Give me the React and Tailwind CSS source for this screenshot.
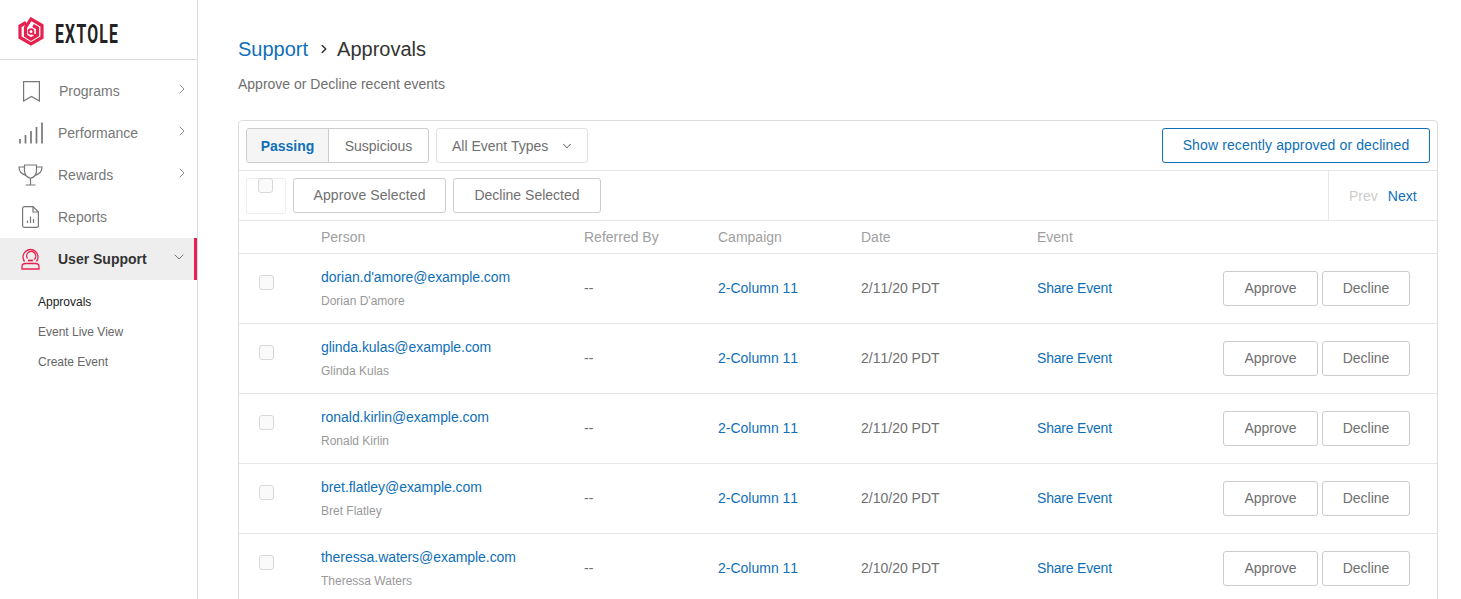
import { ChevronRight, ChevronDown } from 'lucide-react'

const rows = [
  { email: "dorian.d'amore@example.com", name: "Dorian D'amore", date: '2/11/20 PDT' },
  { email: 'glinda.kulas@example.com', name: 'Glinda Kulas', date: '2/11/20 PDT' },
  { email: 'ronald.kirlin@example.com', name: 'Ronald Kirlin', date: '2/11/20 PDT' },
  { email: 'bret.flatley@example.com', name: 'Bret Flatley', date: '2/10/20 PDT' },
  { email: 'theressa.waters@example.com', name: 'Theressa Waters', date: '2/10/20 PDT' },
]

function Logo() {
  return (
    <svg width="26" height="29" viewBox="0 0 26 29" fill="none" stroke="#e8204f">
      <path d="M8 5.5 L2 9 V20.5 L13 27 L24 20.5 V8.5 L13 2 L7.5 10.5 V18.5 L13 22 L19.5 18 V11 L15 8.5" strokeWidth="3.2" />
      <circle cx="13" cy="14.5" r="2.4" strokeWidth="1.8" />
      <path d="M14.5 16.5 L18 18.5" strokeWidth="1.8" />
    </svg>
  )
}

function BookmarkIcon() {
  return (
    <svg width="17" height="21" viewBox="0 0 17 21" fill="none" stroke="#777" strokeWidth="1.2">
      <path d="M.6.6 H16.4 V20 L8.5 15.5 L.6 20 Z" />
    </svg>
  )
}

function BarsIcon() {
  return (
    <svg width="24" height="22" viewBox="0 0 24 22" fill="none" stroke="#777" strokeWidth="1.7">
      <path d="M1 17 V21.5 M6.5 13 V21.5 M12 9 V21.5 M17.5 5 V21.5 M23 .5 V21.5" />
    </svg>
  )
}

function TrophyIcon() {
  return (
    <svg width="25" height="22" viewBox="0 0 25 22" fill="none" stroke="#777" strokeWidth="1.2">
      <path d="M6.5 1 H18.5 V7 C18.5 11 15.5 14 12.5 14 C9.5 14 6.5 11 6.5 7 Z" />
      <path d="M6.5 3 H1 C1 7 3.5 10 8 11.5 M18.5 3 H24 C24 7 21.5 10 17 11.5" />
      <path d="M12.5 14 V20.5 M7.5 21 H17.5" />
    </svg>
  )
}

function ReportIcon() {
  return (
    <svg width="17" height="22" viewBox="0 0 17 22" fill="none" stroke="#777" strokeWidth="1.2">
      <path d="M2.5.6 H11 L16.4 6 V19.5 C16.4 20.6 15.6 21.4 14.5 21.4 H2.5 C1.4 21.4 .6 20.6 .6 19.5 V2.5 C.6 1.4 1.4 .6 2.5 .6 Z" />
      <path d="M11 .6 V6 H16.4" />
      <path d="M5.5 17 V14.5 M8.5 17 V10.5 M11.5 17 V13" />
    </svg>
  )
}

function SupportIcon() {
  return (
    <svg width="19" height="22" viewBox="0 0 19 22" fill="none" stroke="#e8204f" strokeWidth="1.3">
      <path d="M3.5 13.5 A7.5 7.5 0 1 1 15.5 13.5" />
      <path d="M6.5 10.5 A4.5 4.5 0 1 1 13 11.5" />
      <path d="M7 12.5 H12" strokeWidth="1.8" />
      <path d="M1 21 V18.5 C1 16.5 2.5 15.5 4.5 15.5 H14.5 C16.5 15.5 18 16.5 18 18.5 V21 Z" />
    </svg>
  )
}

function NavItem({ icon, label, active, hasArrow, iconClass }) {
  return (
    <div className={'relative flex h-[42px] items-center ' + (active ? 'bg-[#eeeeee]' : '')}>
      <div className={'flex shrink-0 ' + iconClass}>{icon}</div>
      <span className={'text-sm ' + (active ? 'font-bold text-[#333]' : 'text-[#777]')}>{label}</span>
      {hasArrow && <ChevronRight className="absolute right-[7px] top-[11px] text-[#777]" size={16} strokeWidth={1.2} />}
      {active && <ChevronDown className="absolute right-[10px] top-[11px] text-[#555]" size={16} strokeWidth={1.2} />}
      {active && <div className="absolute right-0 top-0 h-full w-[3px] bg-[#e8204f]" />}
    </div>
  )
}

function Sidebar() {
  return (
    <aside className="w-[198px] shrink-0 border-r border-[#dddddd] bg-white">
      <div className="flex h-[60px] items-center border-b border-[#dddddd] pl-[18px] pt-[3px]">
        <Logo />
        <span className="ml-[11px] mt-[7px] origin-left scale-x-[0.63] font-['Roboto',sans-serif] text-[25px] font-bold tracking-[2px] text-[#222]">EXTOLE</span>
      </div>
      <div className="pt-[10px]">
        <NavItem icon={<BookmarkIcon />} label="Programs" hasArrow iconClass="w-[59px] pl-[23px]" />
        <NavItem icon={<BarsIcon />} label="Performance" hasArrow iconClass="w-[58px] pl-[19px]" />
        <NavItem icon={<TrophyIcon />} label="Rewards" hasArrow iconClass="w-[58px] pl-[18px]" />
        <NavItem icon={<ReportIcon />} label="Reports" iconClass="w-[58px] pl-[22px]" />
        <NavItem icon={<SupportIcon />} label="User Support" active iconClass="w-[58px] pl-[21px]" />
      </div>
      <div className="pt-[7px] text-xs text-[#666]">
        <div className="flex h-[30px] items-center pl-[38px] text-[#222]">Approvals</div>
        <div className="flex h-[30px] items-center pl-[38px]">Event Live View</div>
        <div className="flex h-[30px] items-center pl-[38px]">Create Event</div>
      </div>
    </aside>
  )
}

function Btn({ children, className }) {
  return (
    <button className={'flex h-[35px] items-center justify-center rounded-[3px] border border-[#cccccc] bg-white pb-px text-sm text-[#707070] ' + className}>
      {children}
    </button>
  )
}

function Checkbox({ className }) {
  return <span className={'block h-[15px] w-[15px] rounded-[3px] border border-[#d8d8d8] bg-[#fafafa] ' + className} />
}

function Row({ row }) {
  return (
    <div className="flex h-[70px] items-center border-t border-[#e6e6e6] text-sm">
      <div className="w-[82px] pb-[12px] pl-[20px]"><Checkbox /></div>
      <div className="w-[263px] pb-[2px]">
        <div className="tracking-[-0.05px] text-[#0f6fb8]">{row.email}</div>
        <div className="mt-[6px] text-xs text-[#999]">{row.name}</div>
      </div>
      <div className="w-[134px] pb-[2px] text-[#707070]">--</div>
      <div className="w-[143px] pb-[2px] text-[#0f6fb8] [font-kerning:none]">2-Column 11</div>
      <div className="w-[176px] pb-[2px] text-[#707070] [font-kerning:none]">{row.date}</div>
      <div className="w-[186px] pb-[2px] tracking-[-0.2px] text-[#0f6fb8]">Share Event</div>
      <Btn className="w-[95px]">Approve</Btn>
      <Btn className="ml-1 w-[88px]">Decline</Btn>
    </div>
  )
}

export default function App() {
  return (
    <div className="flex h-[599px] overflow-hidden bg-white font-['Liberation_Sans',Arial,sans-serif]">
      <Sidebar />
      <main className="min-w-0 flex-1 pl-[40px] pr-[23px] pt-[37px]">
        <div className="flex h-[24px] items-center text-xl">
          <span className="text-[#0f6fb8]">Support</span>
          <ChevronRight className="ml-[9px] mr-[6px] text-[#333]" size={14} strokeWidth={2.6} />
          <span className="text-[#333]">Approvals</span>
        </div>
        <p className="mt-[13px] text-sm text-[#707070]">Approve or Decline recent events</p>
        <div className="mt-[26px] rounded-t-[4px] border border-[#dddddd]">
          <div className="flex h-[49px] items-center px-[7px]">
            <div className="flex h-[35px] rounded-[3px] border border-[#cccccc] text-sm">
              <div className="flex w-[82px] items-center justify-center rounded-l-[3px] border-r border-[#cccccc] bg-[#f5f5f5] font-bold text-[#0f6fb8]">Passing</div>
              <div className="flex w-[99px] items-center justify-center text-[#707070]">Suspicious</div>
            </div>
            <div className="ml-[7px] flex h-[35px] w-[152px] items-center justify-between rounded-[3px] border border-[#e0e0e0] pl-[15px] pr-[13px] text-sm text-[#707070]">
              All Event Types
              <ChevronDown size={14} strokeWidth={1.8} />
            </div>
            <button className="ml-auto h-[35px] w-[268px] rounded-[3px] border border-[#0f6fb8] pb-[2px] text-sm tracking-[0.12px] text-[#0f6fb8]">Show recently approved or declined</button>
          </div>
          <div className="flex h-[50px] items-center border-t border-[#e6e6e6] pl-[7px]">
            <div className="flex h-[36px] w-[40px] justify-center rounded-[3px] border border-[#eeeeee] pr-[2px]">
              <Checkbox className="-mt-px" />
            </div>
            <Btn className="ml-[7px] w-[153px] tracking-[0.1px]">Approve Selected</Btn>
            <Btn className="ml-[7px] w-[148px]">Decline Selected</Btn>
            <div className="ml-auto flex h-full w-[109px] items-center border-l border-[#e6e6e6] pl-[20px] text-sm">
              <span className="text-[#cccccc]">Prev</span>
              <span className="ml-[10px] text-[#0f6fb8]">Next</span>
            </div>
          </div>
          <div className="flex h-[33px] items-center border-t border-[#e6e6e6] text-sm text-[#a0a0a0]">
            <div className="ml-[82px] w-[263px]">Person</div>
            <div className="w-[134px]">Referred By</div>
            <div className="w-[143px]">Campaign</div>
            <div className="w-[176px]">Date</div>
            <div>Event</div>
          </div>
          {rows.map((row) => (
            <Row row={row} key={row.email} />
          ))}
        </div>
      </main>
    </div>
  )
}
